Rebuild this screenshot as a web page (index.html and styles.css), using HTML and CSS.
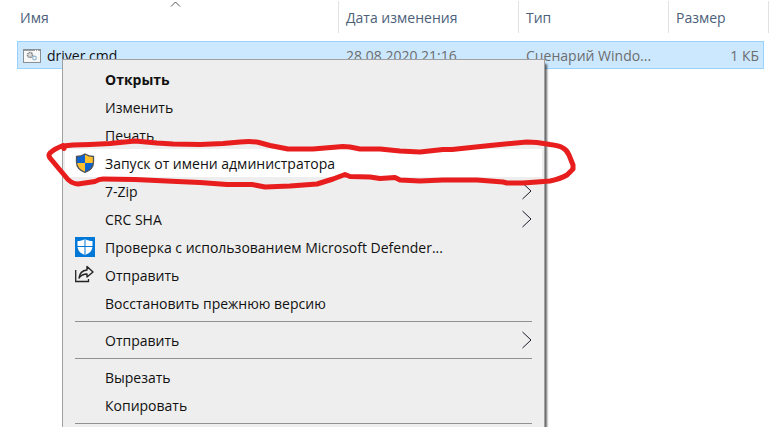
FILE: index.html
```html
<!DOCTYPE html>
<html lang="ru">

<head>
  <meta charset="UTF-8" />
  <meta name="viewport" content="width=device-width, initial-scale=1.0" />
  <title>driver.cmd</title>
  <link rel="stylesheet" href="styles.css">
</head>

<body>
  <main class="explorer">
    <table class="files">
      <thead>
        <tr>
          <th>Имя
            <svg class="sort" width="11" height="6" viewBox="0 0 11 6"><path d="M1 5.500L5.500 1L10 5.500" /></svg>
          </th>
          <th>Дата изменения</th>
          <th>Тип</th>
          <th>Размер</th>
        </tr>
      </thead>
      <tbody>
        <tr>
          <td class="name">
            <svg width="18" height="14" viewBox="0 0 18 14">
              <rect x=".5" y=".5" width="17" height="13" fill="#f8f8f8" stroke="#8a8f94" />
              <path d="M1 1.500h16" stroke="#9a9fa4" />
              <path d="M12 1.500h1M14 1.500h1" stroke="#fff" />
              <circle cx="7" cy="6" r="2.500" fill="#ddd" stroke="#888" stroke-width="1.500" stroke-dasharray="1.500 .6" />
              <circle cx="11.500" cy="9" r="1.800" fill="#fff" stroke="#8db3cf" stroke-width="1.200" />
            </svg>
            driver.cmd
          </td>
          <td>28.08.2020 21:16</td>
          <td>Сценарий Windo...</td>
          <td class="size">1 КБ</td>
        </tr>
      </tbody>
    </table>

    <div class="menu">
      <button class="default">Открыть</button>
      <button>Изменить</button>
      <button>Печать</button>
      <button class="active">
        <svg class="icon" width="20" height="20" viewBox="0 0 20 20">
          <path d="M10 1C7.500 2.700 4.500 3.500 1.500 3.500V9C1.500 14 5 17.500 10 19.300C15 17.500 18.500 14 18.500 9V3.500C15.500 3.500 12.500 2.700 10 1Z" fill="#ffc02e" />
          <path d="M10 1C7.500 2.700 4.500 3.500 1.500 3.500V10H10ZM10 10H18.400C18 14.500 15 17.500 10 19.300Z" fill="#0a63cf" />
          <path d="M10 1C7.500 2.700 4.500 3.500 1.500 3.500V9C1.500 14 5 17.500 10 19.300C15 17.500 18.500 14 18.500 9V3.500C15.500 3.500 12.500 2.700 10 1Z" fill="none" stroke="#4d5358" stroke-width="1.300" />
        </svg>
        Запуск от имени администратора
      </button>
      <button>7-Zip
        <svg class="arrow" width="11" height="18" viewBox="0 0 11 18"><path d="M1.500 1L10 9L1.500 17" /></svg>
      </button>
      <button>CRC SHA
        <svg class="arrow" width="11" height="18" viewBox="0 0 11 18"><path d="M1.500 1L10 9L1.500 17" /></svg>
      </button>
      <button>
        <svg class="icon" width="20" height="20" viewBox="0 0 20 20">
          <path d="M0 0H20V20H0Z" fill="#0078d7" />
          <path d="M10 2C7.500 3.500 5 4 2.500 4V9C2.500 13.500 5.500 16.500 10 18C14.500 16.500 17.500 13.500 17.500 9V4C15 4 12.500 3.500 10 2Z" fill="#fff" />
          <path d="M10 1V19M2 9.500H18" stroke="#0078d7" />
        </svg>
        Проверка с использованием Microsoft Defender...
      </button>
      <button>
        <svg class="icon" width="20" height="20" viewBox="0 0 20 20">
          <path d="M.7 5V16.500H13.500V14" fill="none" stroke="#222" stroke-width="1.300" />
          <path d="M12 1.500L18 7L12 12V9C8.500 9 6 10.200 4 13C4.500 8.500 7.500 5.500 12 5Z" fill="none" stroke="#222" stroke-width="1.400" stroke-linejoin="round" />
        </svg>
        Отправить
      </button>
      <button>Восстановить прежнюю версию</button>
      <hr>
      <button>Отправить
        <svg class="arrow" width="11" height="18" viewBox="0 0 11 18"><path d="M1.500 1L10 9L1.500 17" /></svg>
      </button>
      <hr>
      <button>Вырезать</button>
      <button>Копировать</button>
      <hr>
    </div>

    <!-- red marker around "run as administrator" -->
    <svg class="marker" width="532" height="56" viewBox="46 136 532 56">
      <path d="M64 148.500L63 146L73 145L90 144.500L110 143.500L135 141L157 143L173 144L200 144.500L223 143.500L240 142Q252 141 259 142.500L270 145.500L288 149H313L343 146.500L350 147L360 149H380L400 151L420 152L443 149.500L452 149.500L490 145.500L527 142L537 142.500L550 144.500Q559 145.500 563 148Q567 150 569 155L573 165V169L567 175Q560 179 550 181L537 182L523 183H507L503 182L477 180H443L420 181L400 180L395 177.500L380 178.500L370 177L350 176.500L345 174.500L333 179L317 184L290 186L265 187L252 184.500H227L200 182.500L177 181.500L135 179.500L103 179Q99 179 95 181.500L78 184Q73 184 68 179.500L60 170L50 158Q48 155 50 153Q54 149 63 145.500" />
    </svg>
  </main>
</body>

</html>
```

FILE: styles.css
```css
body {
  margin: 0;
  background-color: #fff;
  font-family: "Segoe UI", "Open Sans", "Noto Sans", sans-serif;
  font-size: 14px;
}

.explorer {
  position: relative;
  height: 100vh;
  overflow: hidden;
}

.files {
  display: block;
  padding: 1px 6px 0 17px;
}

.files thead,
.files tbody {
  display: block;
}

.files tr {
  display: grid;
  grid-template-columns: 1fr 180px 150px 100px;
}

.files th {
  height: 32px;
  padding: 0 7px 0 3px;
  border-right: 1px solid #e2e2e2;
  color: #4c607a;
  font-weight: normal;
  line-height: 34px;
  text-align: left;
}

.files th + th {
  padding-left: 7px;
}

.sort {
  position: absolute;
  left: 170px;
  top: 1px;
  fill: none;
  stroke: #555;
}

.files tbody tr {
  grid-template-columns: 1fr 180px 150px 94px;
  box-sizing: border-box;
  height: 28px;
  margin: 8px 5px 0 0;
  background-color: #cce8ff;
  border: 1px solid #99d1ff;
}

.files td {
  padding: 0 4px 0 7px;
  color: #6d6d6d;
  line-height: 27px;
  white-space: nowrap;
}

.files .name {
  display: flex;
  align-items: center;
  gap: 6px;
  padding-left: 5px;
  color: #111;
}

.files .size {
  text-align: right;
}

.menu {
  position: absolute;
  left: 62px;
  top: 59px;
  box-sizing: border-box;
  width: 483px;
  padding: 5px 2px;
  background-color: #eee;
  border: 1px solid #a0a0a0;
  box-shadow: 3px 4px 2px -1px rgba(0, 0, 0, 0.6);
}

.menu button {
  position: relative;
  display: flex;
  align-items: center;
  width: 100%;
  height: 28px;
  padding: 0 10px 0 40px;
  background-color: transparent;
  border: none;
  color: #111;
  font: inherit;
  text-align: left;
  white-space: nowrap;
}

.menu .default {
  font-weight: bold;
}

.menu .active,
.menu button:hover {
  background-color: #fff;
}

.menu hr {
  height: 1px;
  margin: 4px 10px;
  border: none;
  background-color: #919191;
}

.icon {
  position: absolute;
  left: 10px;
  top: 4px;
}

.arrow {
  margin-left: auto;
  fill: none;
  stroke: #1a1a2a;
}

.marker {
  position: absolute;
  left: 46px;
  top: 136px;
  fill: none;
  stroke: #e81e1e;
  stroke-width: 5;
  stroke-linecap: round;
  stroke-linejoin: round;
  pointer-events: none;
}
```
